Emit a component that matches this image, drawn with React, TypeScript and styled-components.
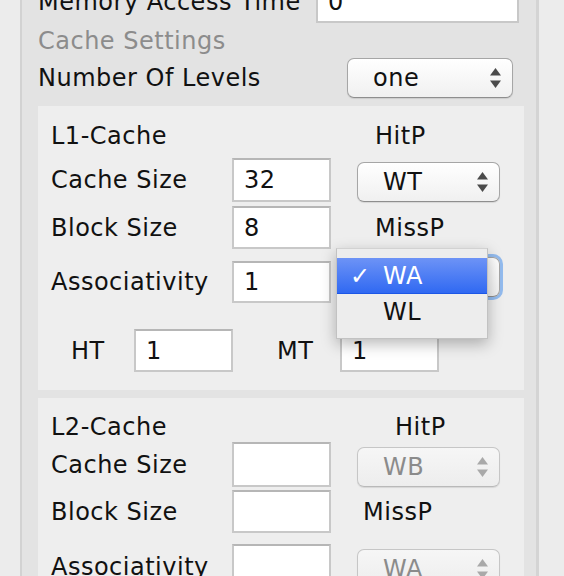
import React from "react";
import styled, { createGlobalStyle } from "styled-components";

const GlobalStyle = createGlobalStyle`
  html, body {
    margin: 0;
    padding: 0;
  }
  body {
    width: 564px;
    height: 576px;
    overflow: hidden;
    background: #ececec;
    font-family: "DejaVu Sans", "Liberation Sans", sans-serif;
    font-size: 24px;
    line-height: 28px;
    letter-spacing: 0.5px;
    color: #111;
  }
`;

const Panel = styled.div`
  margin-left: 20px;
  width: 519px;
  height: 640px;
  box-sizing: border-box;
  background: #e3e3e3;
  border-left: 2px solid #d2d2d2;
  border-right: 3px solid #d4d4d4;
  padding: 0 12px 0 16px;
`;

const TopRow = styled.div<{ $h: number; $mt?: number; $mb?: number }>`
  display: flex;
  align-items: center;
  height: ${(p) => p.$h}px;
  margin-top: ${(p) => p.$mt || 0}px;
  margin-bottom: ${(p) => p.$mb || 0}px;
`;

const TopLabel = styled.div<{ $muted?: boolean }>`
  flex: 1;
  white-space: nowrap;
  color: ${(p) => (p.$muted ? "#8c8c8c" : "#111")};
`;

const Field = styled.input<{ $w?: number; $mr?: number }>`
  box-sizing: border-box;
  width: ${(p) => p.$w || 99}px;
  height: 100%;
  margin: 0 ${(p) => p.$mr || 0}px 0 0;
  padding: 0 10px;
  border: 2px solid #c8c8c8;
  border-top-color: #b6b6b6;
  background: #fff;
  font: inherit;
  letter-spacing: inherit;
  color: #111;
  outline: none;
`;

const SelectBox = styled.div<{
  $w?: number;
  $mr?: number;
  $mt?: number;
  $disabled?: boolean;
  $focused?: boolean;
}>`
  position: relative;
  box-sizing: border-box;
  width: ${(p) => p.$w || 143}px;
  height: 40px;
  margin-right: ${(p) => p.$mr || 0}px;
  margin-top: ${(p) => p.$mt || 0}px;
  display: flex;
  align-items: center;
  justify-content: space-between;
  padding: 0 11px 0 25px;
  border: 1px solid ${(p) => (p.$disabled ? "#c6c6c6" : "#a6a6a6")};
  border-bottom-color: ${(p) => (p.$disabled ? "#b9b9b9" : "#8e8e8e")};
  border-radius: 7px;
  background: ${(p) =>
    p.$disabled
      ? "linear-gradient(#f6f6f6, #ededed)"
      : "linear-gradient(#ffffff, #f0f0f0)"};
  box-shadow: ${(p) =>
    p.$focused ? "0 0 0 3px #93bbee" : "0 1px 1px rgba(0, 0, 0, 0.1)"};
  color: ${(p) => (p.$disabled ? "#8b8b8b" : "#111")};
  align-self: flex-start;
`;

const Arrows = ({ disabled }: { disabled?: boolean }) => (
  <svg width="11" height="20" viewBox="0 0 11 20">
    <g fill={disabled ? "#a9a9a9" : "#4b4b4b"}>
      <polygon points="5.5,0 11,7.5 0,7.5" />
      <polygon points="0,12.5 11,12.5 5.5,20" />
    </g>
  </svg>
);

function Select({
  value,
  ...rest
}: {
  value: string;
  $w?: number;
  $mr?: number;
  $mt?: number;
  $disabled?: boolean;
  $focused?: boolean;
  children?: React.ReactNode;
}) {
  return (
    <SelectBox {...rest}>
      <span>{value}</span>
      <Arrows disabled={rest.$disabled} />
      {rest.children}
    </SelectBox>
  );
}

const CachePanel = styled.div<{ $pt: number }>`
  background: #eeeeee;
  padding: ${(p) => p.$pt}px 0 18px 13px;
  margin-bottom: 8px;
`;

const CacheRow = styled.div<{ $h: number; $mt?: number }>`
  display: grid;
  grid-template-columns: 181px 99px 26px 143px;
  align-items: center;
  height: ${(p) => p.$h}px;
  margin-top: ${(p) => p.$mt || 0}px;
`;

const RowLabel = styled.div`
  white-space: nowrap;
`;

const SideLabel = styled.div<{ $pl: number }>`
  grid-column: 4;
  padding-left: ${(p) => p.$pl}px;
  white-space: nowrap;
`;

const SideCell = styled.div`
  grid-column: 4;
  height: 100%;
  display: flex;
`;

const TimeRow = styled.div`
  display: flex;
  align-items: center;
  height: 43px;
  margin-top: 26px;
  padding-left: 20px;
`;

const TimeLabel = styled.div<{ $ml?: number }>`
  width: 63px;
  margin-left: ${(p) => p.$ml || 0}px;
`;

const Popup = styled.div`
  position: absolute;
  left: -22px;
  top: -10px;
  width: 152px;
  box-sizing: border-box;
  padding: 9px 0 8px;
  background: #ededed;
  border: 1px solid #c2c2c2;
  border-top-color: #d2d2d2;
  box-shadow: 0 5px 14px rgba(0, 0, 0, 0.28);
  z-index: 2;
`;

const PopupItem = styled.div<{ $active?: boolean }>`
  display: flex;
  align-items: center;
  height: 36px;
  box-sizing: border-box;
  padding-left: 13px;
  color: ${(p) => (p.$active ? "#fff" : "#111")};
  background: ${(p) =>
    p.$active ? "linear-gradient(#6d93f6, #3069f2)" : "transparent"};
  border-bottom: 1px solid ${(p) => (p.$active ? "#1c57e6" : "transparent")};
`;

const Check = styled.span`
  width: 33px;
`;

export default function App() {
  return (
    <>
      <GlobalStyle />
      <Panel>
        <TopRow $h={43} $mt={-20}>
          <TopLabel>Memory Access Time</TopLabel>
          <Field $w={203} $mr={5} defaultValue="0" readOnly />
        </TopRow>
        <TopRow $h={35}>
          <TopLabel $muted>Cache Settings</TopLabel>
        </TopRow>
        <TopRow $h={40} $mb={8}>
          <TopLabel>Number Of Levels</TopLabel>
          <Select value="one" $w={166} $mr={11} />
        </TopRow>

        <CachePanel $pt={8}>
          <CacheRow $h={44}>
            <RowLabel>L1-Cache</RowLabel>
            <SideLabel $pl={18}>HitP</SideLabel>
          </CacheRow>
          <CacheRow $h={43}>
            <RowLabel>Cache Size</RowLabel>
            <Field defaultValue="32" readOnly />
            <SideCell>
              <Select value="WT" $mt={4} />
            </SideCell>
          </CacheRow>
          <CacheRow $h={43} $mt={5}>
            <RowLabel>Block Size</RowLabel>
            <Field defaultValue="8" readOnly />
            <SideLabel $pl={18}>MissP</SideLabel>
          </CacheRow>
          <CacheRow $h={42} $mt={12}>
            <RowLabel>Associativity</RowLabel>
            <Field defaultValue="1" readOnly />
            <SideCell>
              <Select value="WA" $mt={-4} $focused>
                <Popup>
                  <PopupItem $active>
                    <Check>✓</Check>WA
                  </PopupItem>
                  <PopupItem>
                    <Check />
                    WL
                  </PopupItem>
                </Popup>
              </Select>
            </SideCell>
          </CacheRow>
          <TimeRow>
            <TimeLabel>HT</TimeLabel>
            <Field defaultValue="1" readOnly />
            <TimeLabel $ml={44}>MT</TimeLabel>
            <Field defaultValue="1" readOnly />
          </TimeRow>
        </CachePanel>

        <CachePanel $pt={13}>
          <CacheRow $h={31}>
            <RowLabel>L2-Cache</RowLabel>
            <SideLabel $pl={38}>HitP</SideLabel>
          </CacheRow>
          <CacheRow $h={42}>
            <RowLabel>Cache Size</RowLabel>
            <Field defaultValue="" readOnly />
            <SideCell>
              <Select value="WB" $mt={5} $disabled />
            </SideCell>
          </CacheRow>
          <CacheRow $h={43} $mt={6}>
            <RowLabel>Block Size</RowLabel>
            <Field defaultValue="" readOnly />
            <SideLabel $pl={6}>MissP</SideLabel>
          </CacheRow>
          <CacheRow $h={42} $mt={11}>
            <RowLabel>Associativity</RowLabel>
            <Field defaultValue="" readOnly />
            <SideCell>
              <Select value="WA" $mt={5} $disabled />
            </SideCell>
          </CacheRow>
        </CachePanel>
      </Panel>
    </>
  );
}
